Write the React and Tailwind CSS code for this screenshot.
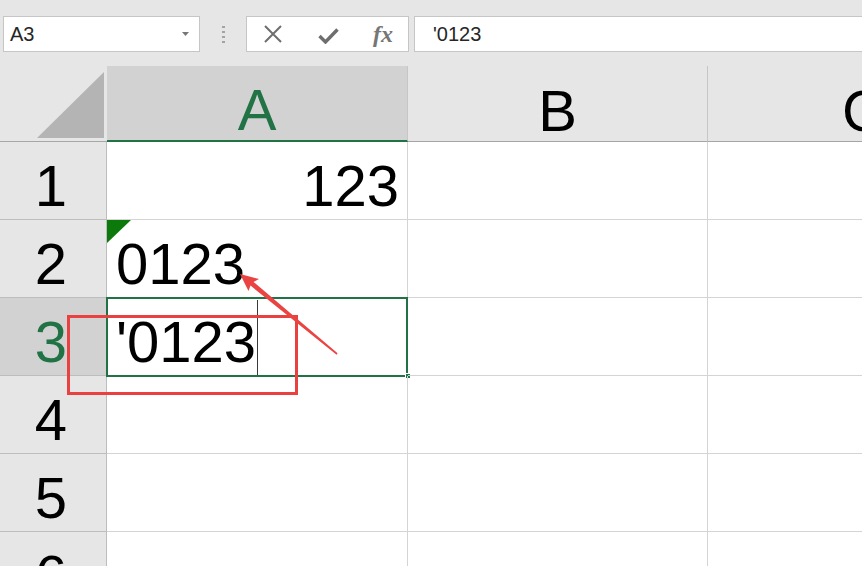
import React from 'react';

const HeaderCell = ({ label, active, width, last }) => (
  <div
    className={`flex h-full shrink-0 items-end justify-center pb-[1px] text-[58px] leading-none ${
      active
        ? 'border-b-2 border-[#217346] bg-[#d2d2d2] text-[#217346]'
        : 'border-b border-[#a6a6a6] text-black'
    } ${last ? 'grow overflow-hidden pl-[134px]' : 'border-r border-r-[#c6c6c6]'}`}
    style={width ? { width } : undefined}
  >
    {label}
  </div>
);

const RowHeader = ({ n, active }) => (
  <div
    className={`flex h-full w-[107px] shrink-0 items-end justify-center border-r border-b border-[#bdbdbd] pb-[4px] pr-[4px] text-[58px] leading-none ${
      active ? 'bg-[#d2d2d2] text-[#217346]' : 'bg-[#e6e6e6] text-black'
    }`}
  >
    {n}
  </div>
);

const Cell = ({ children, className = '', w }) => (
  <div
    className={`relative flex h-full shrink-0 items-end border-r border-b border-[#d4d4d4] pb-[4px] text-[58px] leading-none text-black ${className}`}
    style={w ? { width: w } : undefined}
  >
    {children}
  </div>
);

const Row = ({ n, active, a }) => (
  <div className="flex h-[78px] shrink-0">
    <RowHeader n={n} active={active} />
    <Cell w={301}>{a}</Cell>
    <Cell w={300} />
    <div className="h-full grow border-b border-[#d4d4d4]" />
  </div>
);

export default function App() {
  return (
    <div className="relative h-[566px] w-[862px] overflow-hidden bg-white font-['Liberation_Sans',Arial,sans-serif]">
      {/* formula bar */}
      <div className="flex h-[66px] items-start bg-[#e6e6e6] pt-[16px]">
        <div className="ml-[3px] flex h-[36px] w-[197px] items-center justify-between border border-[#c6c6c6] bg-white pl-[6px] pr-[10px] text-[20px] text-[#262626]">
          <span>A3</span>
          <svg width="7" height="4" viewBox="0 0 7 4">
            <path d="M0 0h7L3.5 4z" fill="#777" />
          </svg>
        </div>
        <div className="flex h-[36px] w-[46px] flex-col items-center justify-center gap-[3px]">
          <span className="h-[2px] w-[3px] bg-[#a3a3a3]" />
          <span className="h-[2px] w-[3px] bg-[#a3a3a3]" />
          <span className="h-[2px] w-[3px] bg-[#a3a3a3]" />
          <span className="h-[2px] w-[3px] bg-[#a3a3a3]" />
        </div>
        <div className="flex h-[36px] w-[163px] items-center border border-[#c6c6c6] bg-white">
          <svg className="ml-[16px]" width="20" height="18" viewBox="0 0 20 18">
            <path d="M2 1l16 16M18 1L2 17" stroke="#6e6e6e" strokeWidth="2" fill="none" />
          </svg>
          <svg className="ml-[35px] mt-[3px]" width="21" height="16" viewBox="0 0 21 16">
            <path d="M1.5 8l6 6L19.5 1.5" stroke="#6e6e6e" strokeWidth="3.4" fill="none" />
          </svg>
          <span className="ml-[34px] font-['Liberation_Serif',serif] text-[24px] font-bold italic leading-none text-[#767676]">
            fx
          </span>
        </div>
        <div className="ml-[5px] flex h-[36px] grow items-center border border-r-0 border-[#c6c6c6] bg-white pl-[18px] text-[20px] text-[#262626]">
          '0123
        </div>
      </div>

      {/* column headers */}
      <div className="flex h-[76px] bg-[#e6e6e6]">
        <div className="flex h-full w-[107px] shrink-0 items-end justify-end border-b border-[#a6a6a6] pb-[3px] pr-[3px]">
          <svg width="67" height="66" viewBox="0 0 67 66">
            <path d="M67 0V66H0z" fill="#b4b4b4" />
          </svg>
        </div>
        <HeaderCell label="A" active width={301} />
        <HeaderCell label="B" width={300} />
        <HeaderCell label="C" last />
      </div>

      {/* rows */}
      <Row n="1" a={<span className="ml-auto pr-[8px]">123</span>} />
      <Row
        n="2"
        a={
          <>
            <svg className="absolute left-0 top-0" width="24" height="23" viewBox="0 0 24 23">
              <path d="M0 0h24L0 23z" fill="#0b7a0b" />
            </svg>
            <span className="pl-[9px]">0123</span>
          </>
        }
      />
      <Row
        n="3"
        active
        a={
          <>
            <span className="pl-[9px]">'0123</span>
            <span className="absolute bottom-0 left-[150px] top-[2px] w-px bg-[#3a3a3a]" />
            <span className="pointer-events-none absolute -left-px -top-px bottom-[-2px] right-[-1px] border-2 border-[#217346]" />
            <span className="absolute bottom-[-4px] right-[-4px] h-[6px] w-[6px] border border-white bg-[#217346]" />
          </>
        }
      />
      <Row n="4" />
      <Row n="5" />
      <Row n="6" />

      {/* annotation */}
      <div className="pointer-events-none absolute left-[67px] top-[315px] h-[80px] w-[231px] border-[3px] border-[#e8413f]" />
      <svg className="pointer-events-none absolute left-0 top-0" width="862" height="566" viewBox="0 0 862 566">
        <polygon
          points="240,274 259,279 253.6,281.9 337.6,353.3 336.6,354.7 250.5,285.6 248.5,291"
          fill="#ea4442"
        />
      </svg>
    </div>
  );
}
